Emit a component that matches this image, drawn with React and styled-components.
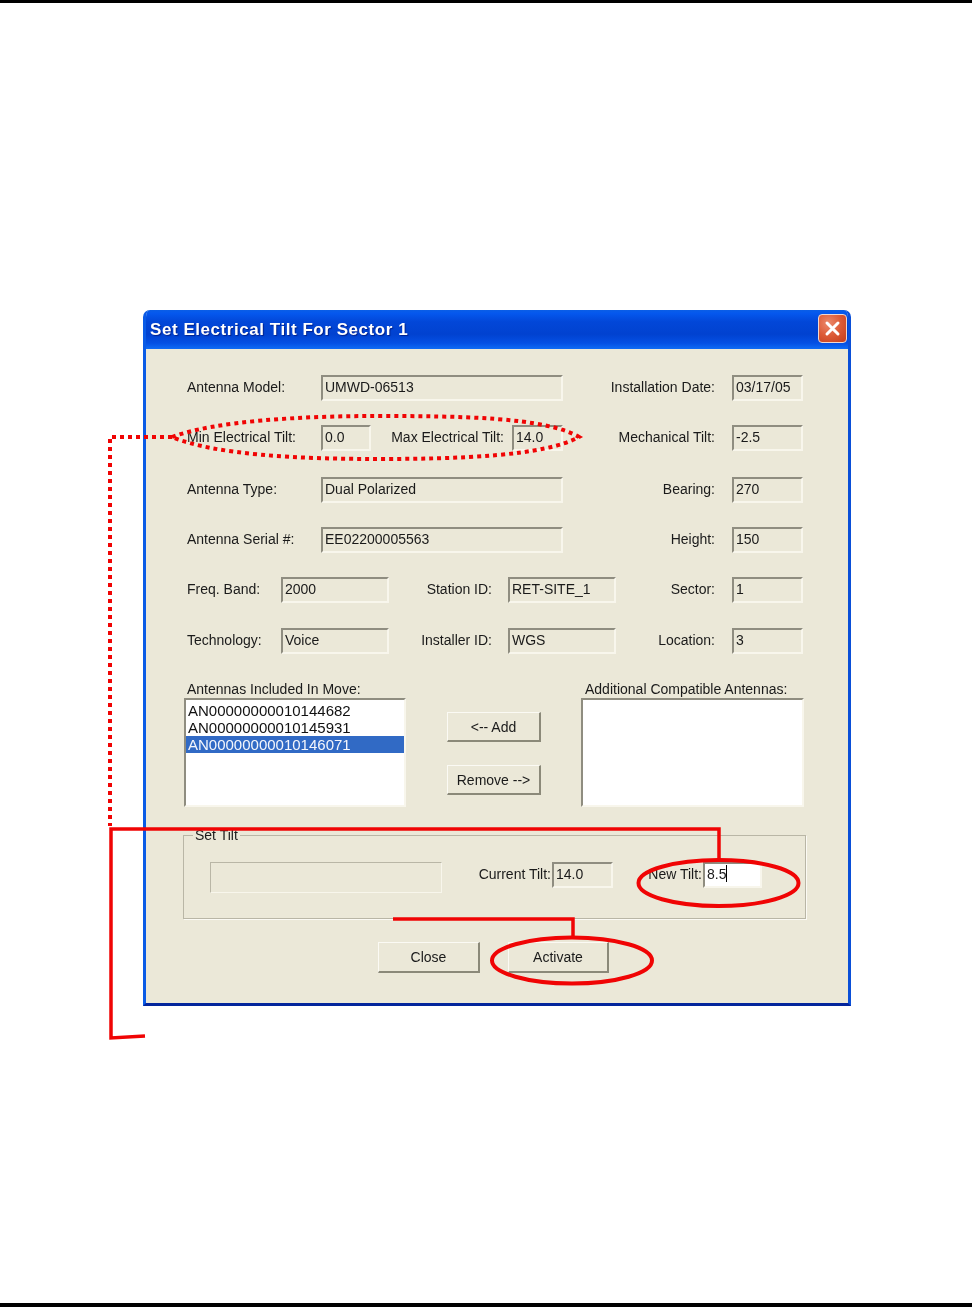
import React from "react";
import styled, { createGlobalStyle } from "styled-components";

const GlobalStyle = createGlobalStyle`
  html, body {
    margin: 0;
    background: #fff;
  }
  body {
    font-family: "Liberation Sans", Arial, sans-serif;
    color: #1a1a1a;
  }
`;

const Page = styled.div`
  position: relative;
  width: 972px;
  height: 1307px;
  display: flex;
  flex-direction: column;
  overflow: hidden;
`;

const Rule = styled.div`
  height: ${(p) => p.$h}px;
  flex: none;
  background: #000;
  margin-top: ${(p) => (p.$bottom ? "auto" : 0)};
`;

// Dialog window
const Dialog = styled.div`
  width: 708px;
  height: 696px;
  margin: 307px 0 0 143px;
  display: flex;
  flex-direction: column;
  background: #ebe8d8;
  border-radius: 7px 7px 0 0;
  overflow: hidden;
  box-sizing: border-box;
  border-left: 3px solid #0a5be6;
  border-right: 3px solid #0a4fd8;
  border-bottom: 3px solid #03259c;
`;

const TitleBar = styled.div`
  height: 39px;
  flex: none;
  margin: 0 -3px;
  padding: 0 4px 0 7px;
  display: flex;
  align-items: center;
  justify-content: space-between;
  background: linear-gradient(
    180deg,
    #0a5ee6 0%,
    #0558ee 8%,
    #0247d8 30%,
    #0142d0 62%,
    #0450e4 85%,
    #0f6cf5 100%
  );
`;

const Title = styled.div`
  color: #fff;
  font-size: 17px;
  font-weight: 700;
  letter-spacing: 0.55px;
  text-shadow: 1px 1px 1px #00208a;
  filter: blur(0.3px);
`;

const CloseBox = styled.div`
  width: 29px;
  height: 29px;
  margin-top: -3px;
  box-sizing: border-box;
  border: 1px solid #f2d8cf;
  border-radius: 4px;
  background: radial-gradient(circle at 35% 30%, #ec8a6c 0%, #dc5a36 50%, #c33d1c 100%);
  display: flex;
  align-items: center;
  justify-content: center;
`;

const Body = styled.div`
  flex: 1;
  padding: 26px 41px 0 41px;
  font-size: 14px;
  filter: blur(0.3px);
`;

// Form rows
const FormRow = styled.div`
  display: flex;
  align-items: flex-start;
  height: ${(p) => p.$h}px;
`;

const Label = styled.div`
  width: ${(p) => p.$w}px;
  flex: none;
  box-sizing: border-box;
  height: 26px;
  line-height: 24px;
  text-align: ${(p) => (p.$right ? "right" : "left")};
  padding-right: ${(p) => p.$pad || 0}px;
  white-space: nowrap;
`;

const Field = styled.div`
  width: ${(p) => p.$w}px;
  height: ${(p) => p.$tall || 26}px;
  flex: none;
  box-sizing: border-box;
  border-style: solid;
  border-width: 2px;
  border-color: #8f8d80 #f8f6ec #f8f6ec #8f8d80;
  padding-left: 2px;
  line-height: 20px;
  background: ${(p) => (p.$white ? "#fff" : "transparent")};
  white-space: nowrap;
`;

const Caret = styled.span`
  display: inline-block;
  width: 1px;
  height: 17px;
  background: #000;
  vertical-align: -3px;
`;

// Antenna lists
const ListArea = styled.div`
  display: grid;
  grid-template-columns: 222px 175px 223px;
  margin: 0 0 0 -3px;
`;

const ListColumn = styled.div`
  display: flex;
  flex-direction: column;
`;

const ListLabel = styled.div`
  height: 17px;
  line-height: 16px;
  padding-left: ${(p) => p.$pad}px;
  white-space: nowrap;
`;

const ListBox = styled.div`
  height: 109px;
  box-sizing: border-box;
  border-style: solid;
  border-width: 2px;
  border-color: #8f8d80 #f8f6ec #f8f6ec #8f8d80;
  background: #fff;
  padding-top: 2px;
`;

const ListItem = styled.div`
  height: 17px;
  line-height: 17px;
  padding-left: 2px;
  font-size: 15px;
  color: ${(p) => (p.$selected ? "#f4f6fc" : "#111")};
  background: ${(p) => (p.$selected ? "#316ac5" : "transparent")};
`;

const MoveButtons = styled.div`
  padding: 31px 0 0 41px;
  display: flex;
  flex-direction: column;
  gap: 23px;
`;

const Button = styled.div`
  width: ${(p) => p.$w}px;
  height: ${(p) => p.$h}px;
  box-sizing: border-box;
  border-style: solid;
  border-width: 1px 2px 2px 1px;
  border-color: #fbfaf4 #8b8979 #8b8979 #fbfaf4;
  display: flex;
  align-items: center;
  justify-content: center;
  white-space: nowrap;
`;

// Set Tilt group
const Group = styled.fieldset`
  width: 623px;
  height: 84px;
  margin: 28px 0 0 -4px;
  padding: 0;
  box-sizing: border-box;
  border: 0;
  outline: 0;
  box-shadow: inset 1px 1px 0 #b9b6a6, inset -1px -1px 0 #b9b6a6, 1px 1px 0 #fbfaf4;
  position: relative;
  display: flex;
  align-items: flex-start;
  padding: 27px 0 0 27px;
`;

const GroupTitle = styled.div`
  position: absolute;
  left: 10px;
  top: -8px;
  padding: 0 2px;
  height: 17px;
  line-height: 17px;
  background: #ebe8d8;
`;

const BlankBox = styled(Field)`
  margin-right: 0;
  border-width: 1px;
  border-color: #b9b6a6 #f8f6ec #f8f6ec #b9b6a6;
`;

const FooterButtons = styled.div`
  display: flex;
  gap: 28px;
  margin: 23px 0 0 191px;
`;

// Red markup on top of the screenshot
const Markup = styled.svg`
  position: absolute;
  left: 0;
  top: 0;
  pointer-events: none;
  filter: blur(0.25px);
`;

const CloseIcon = () => (
  <svg width="17" height="17" viewBox="0 0 17 17">
    <path d="M3 3 L14 14 M14 3 L3 14" stroke="#fff" strokeWidth="3" strokeLinecap="round" />
  </svg>
);

const App = () => {
  return (
    <Page>
      <GlobalStyle />
      <Rule $h={3} />
      <Dialog>
        <TitleBar>
          <Title>Set Electrical Tilt For Sector 1</Title>
          <CloseBox>
            <CloseIcon />
          </CloseBox>
        </TitleBar>
        <Body>
          <FormRow $h={50}>
            <Label $w={134}>Antenna Model:</Label>
            <Field $w={242}>UMWD-06513</Field>
            <Label $w={169} $right $pad={17}>Installation Date:</Label>
            <Field $w={71}>03/17/05</Field>
          </FormRow>
          <FormRow $h={52}>
            <Label $w={134}>Min Electrical Tilt:</Label>
            <Field $w={50}>0.0</Field>
            <Label $w={141} $right $pad={8}>Max Electrical Tilt:</Label>
            <Field $w={51}>14.0</Field>
            <Label $w={169} $right $pad={17}>Mechanical Tilt:</Label>
            <Field $w={71}>-2.5</Field>
          </FormRow>
          <FormRow $h={50}>
            <Label $w={134}>Antenna Type:</Label>
            <Field $w={242}>Dual Polarized</Field>
            <Label $w={169} $right $pad={17}>Bearing:</Label>
            <Field $w={71}>270</Field>
          </FormRow>
          <FormRow $h={50}>
            <Label $w={134}>Antenna Serial #:</Label>
            <Field $w={242}>EE02200005563</Field>
            <Label $w={169} $right $pad={17}>Height:</Label>
            <Field $w={71}>150</Field>
          </FormRow>
          <FormRow $h={51}>
            <Label $w={94}>Freq. Band:</Label>
            <Field $w={108}>2000</Field>
            <Label $w={119} $right $pad={16}>Station ID:</Label>
            <Field $w={108}>RET-SITE_1</Field>
            <Label $w={116} $right $pad={17}>Sector:</Label>
            <Field $w={71}>1</Field>
          </FormRow>
          <FormRow $h={53}>
            <Label $w={94}>Technology:</Label>
            <Field $w={108}>Voice</Field>
            <Label $w={119} $right $pad={16}>Installer ID:</Label>
            <Field $w={108}>WGS</Field>
            <Label $w={116} $right $pad={17}>Location:</Label>
            <Field $w={71}>3</Field>
          </FormRow>
          <ListArea>
            <ListColumn>
              <ListLabel $pad={3}>Antennas Included In Move:</ListLabel>
              <ListBox>
                <ListItem>AN00000000010144682</ListItem>
                <ListItem>AN00000000010145931</ListItem>
                <ListItem $selected>AN00000000010146071</ListItem>
              </ListBox>
            </ListColumn>
            <MoveButtons>
              <Button $w={94} $h={30}>&lt;-- Add</Button>
              <Button $w={94} $h={30}>Remove --&gt;</Button>
            </MoveButtons>
            <ListColumn>
              <ListLabel $pad={4}>Additional Compatible Antennas:</ListLabel>
              <ListBox />
            </ListColumn>
          </ListArea>
          <Group>
            <GroupTitle>Set Tilt</GroupTitle>
            <BlankBox $w={232} $tall={31} />
            <Label $w={110} $right $pad={1}>Current Tilt:</Label>
            <Field $w={61}>14.0</Field>
            <Label $w={90} $right $pad={1}>New Tilt:</Label>
            <Field $w={59} $white>8.5<Caret /></Field>
          </Group>
          <FooterButtons>
            <Button $w={102} $h={31}>Close</Button>
            <Button $w={101} $h={31}>Activate</Button>
          </FooterButtons>
        </Body>
      </Dialog>
      <Rule $h={4} $bottom />
      <Markup width="972" height="1307" viewBox="0 0 972 1307" fill="none">
        <path
          d="M172 437 C 215 421, 300 416, 376 416 C 460 416, 545 417, 579 437 C 545 456, 460 459, 376 459 C 300 459, 215 455, 172 437 Z M172 437 H110 V826"
          stroke="#f00404"
          strokeWidth="4"
          strokeDasharray="4 4"
        />
        <path
          d="M719 860 V829 H111 V1038 L145 1036"
          stroke="#f00404"
          strokeWidth="3.5"
        />
        <path d="M393 919 H573 V939" stroke="#f00404" strokeWidth="3.5" />
        <ellipse cx="718.5" cy="883" rx="80" ry="23" stroke="#f00404" strokeWidth="4" />
        <ellipse cx="572" cy="960.5" rx="80" ry="23" stroke="#f00404" strokeWidth="4" />
      </Markup>
    </Page>
  );
};

export default App;
